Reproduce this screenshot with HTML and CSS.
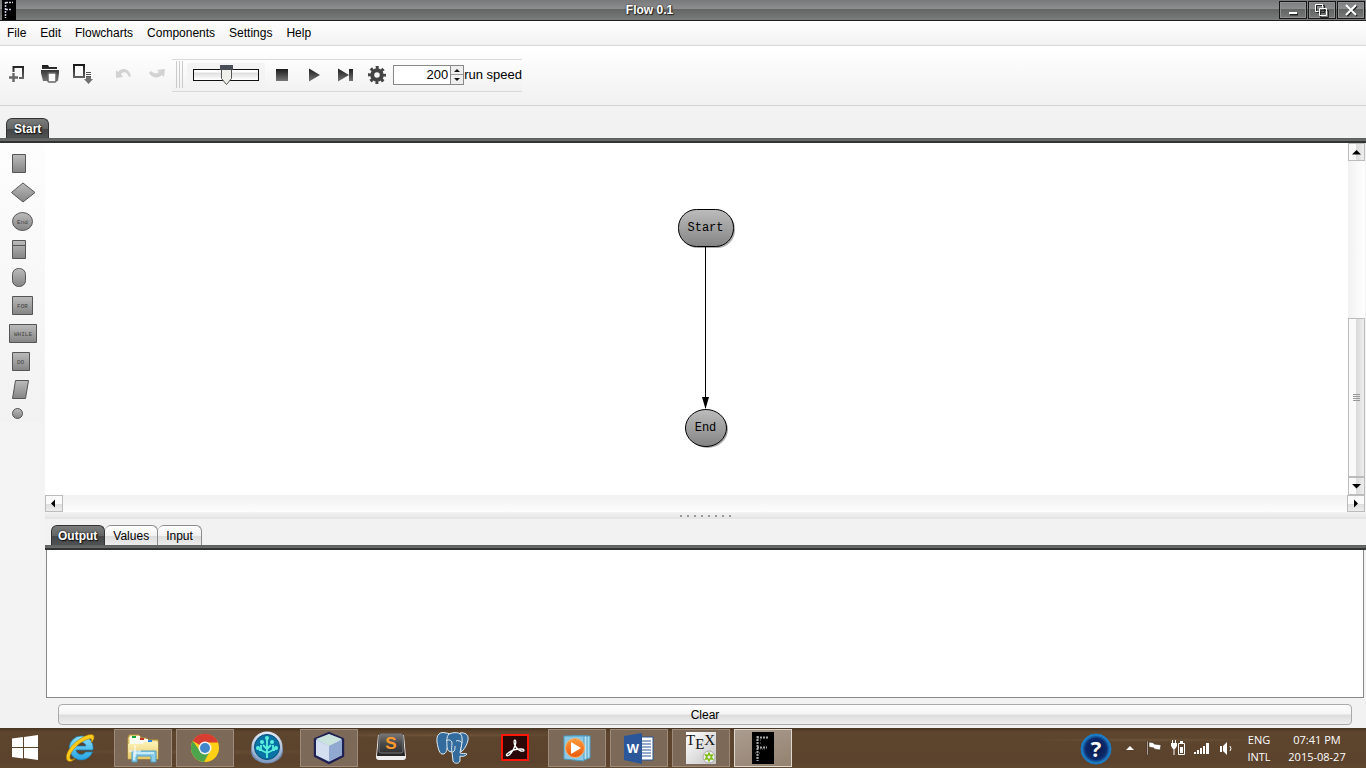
FILE: index.html
```html
<!DOCTYPE html>
<html lang="en">
<head>
<meta charset="utf-8">
<title>Flow 0.1</title>
<link rel="stylesheet" href="styles.css">
</head>
<body>
<svg class="defs" aria-hidden="true">
  <defs>
    <linearGradient id="shape" x1="0" y1="0" x2="0" y2="1"><stop offset="0" stop-color="#bcbcbc"/><stop offset="1" stop-color="#848484"/></linearGradient>
    <linearGradient id="ink" x1="0" y1="0" x2="0" y2="1"><stop offset="0" stop-color="#1c1c1c"/><stop offset="1" stop-color="#777"/></linearGradient>
    <linearGradient id="inkArea" gradientUnits="userSpaceOnUse" x1="0" y1="0" x2="0" y2="20"><stop offset="0" stop-color="#151515"/><stop offset="1" stop-color="#858585"/></linearGradient>
    <linearGradient id="ie" x1="0" y1="0" x2="0" y2="1"><stop offset="0" stop-color="#8be0fb"/><stop offset="1" stop-color="#27a5e4"/></linearGradient>
    <linearGradient id="folder" x1="0" y1="0" x2="0" y2="1"><stop offset="0" stop-color="#fdf3b8"/><stop offset="1" stop-color="#e6c766"/></linearGradient>
    <linearGradient id="metal" x1="0" y1="0" x2="0" y2="1"><stop offset="0" stop-color="#e3ecf7"/><stop offset="1" stop-color="#7f9cc4"/></linearGradient>
    <linearGradient id="key" x1="0" y1="0" x2="0" y2="1"><stop offset="0" stop-color="#777"/><stop offset=".5" stop-color="#4a4a4a"/><stop offset="1" stop-color="#303030"/></linearGradient>
    <linearGradient id="orange" x1="0" y1="0" x2="0" y2="1"><stop offset="0" stop-color="#ff9a3c"/><stop offset="1" stop-color="#e8590c"/></linearGradient>
    <linearGradient id="paper" x1="0" y1="0" x2="1" y2="1"><stop offset="0" stop-color="#fff"/><stop offset="1" stop-color="#c4c4c4"/></linearGradient>
    <radialGradient id="help"><stop offset="0" stop-color="#0a1746"/><stop offset=".7" stop-color="#0c2a6c"/><stop offset="1" stop-color="#2398e6"/></radialGradient>
  </defs>
</svg>

<header class="titlebar">
  <svg class="app-icon" width="14" height="20" viewBox="0 0 14 20"><rect width="14" height="20" fill="#000"/><path d="M3.500 2V18M4 2.500H11M4 9.500H10" stroke="#ccd" stroke-width="1.500" stroke-dasharray="2 1" fill="none"/></svg>
  <h1 class="title">Flow 0.1</h1>
  <div class="window-buttons">
    <button class="window-button" aria-label="Minimize"><svg width="26" height="16" viewBox="0 0 26 16"><path d="M10 12.500h8" stroke="#222" stroke-width="2"/><path d="M9 11h8" stroke="#fff" stroke-width="2"/></svg></button>
    <button class="window-button" aria-label="Restore"><svg width="26" height="16" viewBox="0 0 26 16"><g fill="none" stroke="#222"><path d="M7.500 3.500h8v7h-8zM11.500 8.500h8v7h-8z"/></g><path d="M9.500 9.500h-3v-7h7v3M10.500 6.500h7v7h-7z" fill="none" stroke="#fff"/></svg></button>
    <button class="window-button" aria-label="Close"><svg width="26" height="16" viewBox="0 0 26 16"><path d="M9 4l10 10M19 4l-10 10" stroke="#222" stroke-width="2"/><path d="M8 3l10 10M18 3l-10 10" stroke="#fff" stroke-width="2"/></svg></button>
  </div>
</header>

<nav class="menubar">
  <button>File</button><button>Edit</button><button>Flowcharts</button><button>Components</button><button>Settings</button><button>Help</button>
</nav>

<section class="toolbar">
  <div class="file-tools">
    <button aria-label="New"><svg width="20" height="20" viewBox="0 0 20 20"><path d="M6.500 8V3H16v11h-4" fill="none" stroke="url(#inkArea)" stroke-width="2"/><path d="M2 13.500h9M6.500 9v9" stroke="#666" stroke-width="2.400"/></svg></button>
    <button aria-label="Open"><svg width="20" height="20" viewBox="0 0 20 20"><path d="M2 1h6l1 2h8v2H2zM1 6h18v3l-1 8H3L1 9z" fill="url(#inkArea)"/><rect x="8" y="9" width="8" height="9" rx="1" fill="#fafafa" stroke="#666" stroke-width="1.500"/></svg></button>
    <button aria-label="Save"><svg width="20" height="20" viewBox="0 0 20 20"><rect x="1" y="1" width="10" height="12" fill="none" stroke="url(#inkArea)" stroke-width="2"/><path d="M13 8.500h5M13 10.500h5M13 12.500h5" stroke="#555"/><path d="M13 13h5v2h2l-4.500 5L11 15h2z" fill="#707070"/></svg></button>
    <button class="undo" aria-label="Undo" disabled><svg width="18" height="12" viewBox="0 0 18 12"><path d="M1 2l2 2c4-5 11-4 13 4l-2 1c-2-5-5-6-8-3l2 3-7 1z" fill="#d2d2d2"/></svg></button>
    <button class="redo" aria-label="Redo" disabled><svg width="18" height="12" viewBox="0 0 18 12"><path d="M17 1l-1 8-2-2c-4 4-10 3-13-2l2-2c3 3 6 3 8 1L9 2z" fill="#d2d2d2"/></svg></button>
  </div>
  <div class="run-tools">
    <span class="grip"></span>
    <div class="slider-box"><input class="slider" type="range" min="0" max="100" value="51" aria-label="Speed"></div>
    <button class="run-button" aria-label="Stop"><svg width="18" height="18" viewBox="0 0 18 18"><rect x="3" y="3" width="12" height="12" fill="url(#ink)"/></svg></button>
    <button class="run-button" aria-label="Play"><svg width="18" height="18" viewBox="0 0 18 18"><path d="M4 2.500L15 9 4 15.500z" fill="url(#ink)"/></svg></button>
    <button class="run-button" aria-label="Step"><svg width="18" height="18" viewBox="0 0 18 18"><path d="M2 2.500L13 9 2 15.500zM13 3h4v12h-4z" fill="url(#ink)"/></svg></button>
    <button class="run-button" aria-label="Options"><svg width="18" height="18" viewBox="0 0 18 18"><circle cx="9" cy="9" r="4.800" fill="none" stroke="#444" stroke-width="4"/><circle cx="9" cy="9" r="7.500" fill="none" stroke="#444" stroke-width="3" stroke-dasharray="2.950 2.940" stroke-dashoffset="1.470"/></svg></button>
    <div class="spinner">
      <input id="speed" type="text" value="200">
      <div class="spin-buttons"><button aria-label="Increase"><svg width="12" height="8" viewBox="0 0 12 8"><path d="M3 6l3-3 3 3z" fill="#111"/></svg></button><button aria-label="Decrease"><svg width="12" height="8" viewBox="0 0 12 8"><path d="M3 3l3 3 3-3z" fill="#111"/></svg></button></div>
    </div>
    <label class="speed-label" for="speed">run speed</label>
  </div>
</section>

<div class="tabs chart-tabs"><button class="tab active">Start</button></div>

<main class="workspace">
  <aside class="palette">
    <button aria-label="Process"><svg width="30" height="28" viewBox="0 0 30 28"><path d="M4.500 4.500h13v18h-13z"/></svg></button>
    <button aria-label="Decision"><svg width="30" height="28" viewBox="0 0 30 28"><path d="M15 5l12 9.500L15 24 3.500 14.500z"/></svg></button>
    <button aria-label="Terminal"><svg width="30" height="28" viewBox="0 0 30 28"><ellipse cx="14.500" cy="15.500" rx="10" ry="9"/><text x="14.500" y="18">End</text></svg></button>
    <button aria-label="Declaration"><svg width="30" height="28" viewBox="0 0 30 28"><path d="M4.500 6.500h13v18h-13zM4.500 11.500h13"/></svg></button>
    <button aria-label="Start"><svg width="30" height="28" viewBox="0 0 30 28"><rect x="4.500" y="6.500" width="13" height="18" rx="6"/></svg></button>
    <button aria-label="For loop"><svg width="30" height="28" viewBox="0 0 30 28"><path d="M4.500 6.500h20v18h-20z"/><text x="14.500" y="18">FOR</text></svg></button>
    <button aria-label="While loop"><svg width="30" height="28" viewBox="0 0 30 28"><path d="M1.500 6.500h27v18h-27z"/><text x="15" y="18">WHILE</text></svg></button>
    <button aria-label="Do loop"><svg width="30" height="28" viewBox="0 0 30 28"><path d="M4.500 6.500h17v18h-17z"/><text x="12.500" y="18">DO</text></svg></button>
    <button aria-label="Input or output"><svg width="30" height="28" viewBox="0 0 30 28"><path d="M7.500 6.500h13l-3 18h-13z"/></svg></button>
    <button aria-label="Connector"><svg width="30" height="28" viewBox="0 0 30 28"><circle cx="9.500" cy="11.500" r="5"/></svg></button>
  </aside>

  <div class="editor">
    <div class="canvas-row">
      <div class="canvas">
        <svg class="flow" width="70" height="250" viewBox="0 0 70 250">
          <rect x="9" y="8" width="55" height="37" rx="18" fill="#aaa"/>
          <rect x="7.500" y="6.500" width="55" height="37" rx="18" fill="url(#shape)" stroke="#000"/>
          <path d="M34.500 44v161" stroke="#000"/><path d="M31 194h7l-3.500 12z"/>
          <ellipse cx="36.500" cy="226.500" rx="20.500" ry="18.500" fill="#aaa"/>
          <ellipse cx="35" cy="225" rx="20.500" ry="18.500" fill="url(#shape)" stroke="#000"/>
          <text x="34.500" y="28">Start</text><text x="34.500" y="228">End</text>
        </svg>
      </div>
      <div class="vscroll">
        <button aria-label="Scroll up"><svg width="15" height="15" viewBox="0 0 15 15"><path d="M3 9.500L7.500 5 12 9.500z"/></svg></button>
        <div class="track"></div>
        <div class="thumb"></div>
        <button aria-label="Scroll down"><svg width="15" height="15" viewBox="0 0 15 15"><path d="M3 5l4.500 4.500L12 5z"/></svg></button>
      </div>
    </div>
    <div class="hscroll">
      <button aria-label="Scroll left"><svg width="15" height="15" viewBox="0 0 15 15"><path d="M9 3.500L5 7.500l4 4z"/></svg></button>
      <div class="track"></div>
      <button aria-label="Scroll right"><svg width="15" height="15" viewBox="0 0 15 15"><path d="M6 3.500l4 4-4 4z"/></svg></button>
    </div>
    <div class="divider"><span></span></div>
    <div class="tabs output-tabs"><button class="tab active">Output</button><button class="tab">Values</button><button class="tab">Input</button></div>
    <textarea class="output" aria-label="Output" readonly></textarea>
    <div class="clear-row"><button class="clear">Clear</button></div>
  </div>
</main>

<footer class="taskbar">
  <button class="start" aria-label="Windows"><svg width="28" height="28" viewBox="0 0 28 28"><path d="M1 4.500l11-1.500v10H1zM13 3l14-2v12H13zM1 14h11v10.500L1 23zM13 14h14v12l-14-2z" fill="#fff"/></svg></button>
  <div class="apps">
    <button class="app" aria-label="Internet Explorer"><svg width="32" height="32" viewBox="0 0 32 32"><path d="M16 4a12 12 0 1 0 11.500 16h-7c-2 4-9 3-9.500-2h17C29 10 24 4 16 4zm-5 10c1-5 9-5 10 0z" fill="url(#ie)" stroke="#187cb4" stroke-width=".7"/><path d="M3 29c-5-4 2-16 12-22 7-5 14-6 14-2 0 2-1 4-3 6 1-3 1-5-2-4C14 9 4 21 5 26c0 2 3 2 6 0-3 3-6 4-8 3z" fill="#ffca1a" stroke="#ad7908" stroke-width=".5"/></svg></button>
    <button class="app open" aria-label="File Explorer"><svg width="34" height="32" viewBox="0 0 34 32"><path d="M2 5h1V3h10l2 3h5l2 2h10v19H2z" fill="url(#folder)" stroke="#b99436"/><path d="M4 4h10v3h8v3h9v3H4z" fill="#fffef0"/><path d="M6 4h4v2H6z" fill="#13a538"/><path d="M14 6h4v2h-4z" fill="#c33724"/><path d="M22 8h4v2h-4z" fill="#248be3"/><path d="M2 12h14l3-2h13v17H2z" fill="url(#folder)"/><path d="M6 30V19h24v11h-5v-6H11v6z" fill="#8ccde8" stroke="#4f9fc4"/><path d="M8 28v-7h20" fill="none" stroke="#d8f3fd" stroke-width="1.500"/><path d="M9 13v12M3 19h12" stroke="#fff"/></svg></button>
    <button class="app open" aria-label="Chrome"><svg width="32" height="32" viewBox="0 0 32 32"><circle cx="16" cy="16" r="14" fill="#fdcf15"/><path d="M16 16L3.800 9A14 14 0 0 1 29 10.500H16z" fill="#d93c31"/><path d="M3.800 9A14 14 0 0 0 15 30l6-11-5-3-5 3z" fill="#4ca44c"/><circle cx="16" cy="16" r="6.500" fill="#f4f4f4"/><circle cx="16" cy="16" r="5" fill="#4287c9"/></svg></button>
    <button class="app" aria-label="SourceTree"><svg width="34" height="34" viewBox="0 0 34 34"><ellipse cx="17" cy="20" rx="16" ry="12.500" fill="#718baf"/><circle cx="17" cy="16" r="15.500" fill="url(#metal)"/><circle cx="17" cy="16" r="12.500" fill="#0873a4" stroke="#064e7c"/><g fill="none" stroke="#5cf1df" stroke-width="1.800"><path d="M17 27V8M17 22l-6-3v-5M17 22l6-3v-5M17 18l-4-4M17 18l4-4M11 19H9M23 19h2"/></g><g fill="#5cf1df"><circle cx="17" cy="7" r="2"/><circle cx="12" cy="11" r="2"/><circle cx="22" cy="11" r="2"/><circle cx="8" cy="17" r="2"/><circle cx="26" cy="17" r="2"/></g></svg></button>
    <button class="app open" aria-label="NetBeans"><svg width="32" height="34" viewBox="0 0 32 34"><path d="M16 2l14 6v17l-14 7-14-7V8z" fill="#b0c4df" stroke="#202153" stroke-width="2.400" stroke-linejoin="round"/><path d="M3 8l13-5 13 5-13 7z" fill="#cae3dd"/><path d="M3 9l13 6v15L3 24z" fill="#d3dff0"/><path d="M16 15l13-6v15l-13 6z" fill="#91a8d0"/></svg></button>
    <button class="app" aria-label="Sublime Text"><svg width="32" height="32" viewBox="0 0 32 32"><path d="M3 3h26l2 22q0 3-3 3H4q-3 0-3-3z" fill="#eee"/><path d="M4 2h24l2 22H2z" fill="#252525"/><rect x="4" y="2" width="24" height="19" rx="2" fill="url(#key)" stroke="#777"/><text class="sublime" x="16" y="17">S</text></svg></button>
    <button class="app" aria-label="PostgreSQL"><svg width="34" height="34" viewBox="0 0 34 34"><g fill="#336c9c" stroke="#e2edf3" stroke-width="1"><path d="M10 2C4 0 0 4 1 11c1 7 3 13 6 12 3 0 4-4 4-6 2 2 5 2 5 2V5C14 3 12 2 10 2z"/><path d="M13 3c7-3 14-1 14 5 0 5-3 10-3 14 2 1 5 0 7 1-1 2-5 3-7 2v5c-1 3-6 3-7 0l-1-9c-3 0-5-2-5-5 0-5-1-10 2-13z"/><path d="M24 2c5-1 9 2 8 7-1 5-4 10-7 12-1-4 2-9 1-14 0-2-1-3-2-5z"/><path d="M10 10c2-2 6-1 6 2 0 4-1 5 0 9M20 10c2-1 5 0 6 2M17 21c2-1 2-4 2-6" fill="none"/></g></svg></button>
    <button class="app" aria-label="Acrobat Reader"><svg width="30" height="30" viewBox="0 0 30 30"><rect x="2" y="2" width="26" height="25" fill="#2b0808" stroke="#fa1608" stroke-width="2"/><path d="M15 7c2 1 0 8-4 13-3 4-6 3-4 1 3-3 9-5 14-5 4 0 4 3 0 2-4-1-7-6-7-9 0-1 0-2 1-2z" fill="none" stroke="#fff" stroke-width="1.300"/></svg></button>
    <button class="app open" aria-label="Media Player"><svg width="32" height="30" viewBox="0 0 32 30"><g stroke="#4f9dc0"><path d="M12 3h17v22l-10 2z" fill="#a8daf0"/><path d="M8 3h18v23l-10 2z" fill="#bce4f5"/><path d="M3 3h20v25L3 26z" fill="#8cc9e6"/></g><circle cx="14" cy="15" r="9.500" fill="url(#orange)" stroke="#fbb069"/><path d="M10 9l10 6-10 6z" fill="#fff"/></svg></button>
    <button class="app open" aria-label="Word"><svg width="32" height="32" viewBox="0 0 32 32"><path d="M17 5h13v23H17z" fill="#fff" stroke="#2b579a"/><path d="M19 9h9M19 12h9M19 15h9M19 18h9M19 21h9M19 24h9" stroke="#2b579a"/><path d="M1 4l18-3v31L1 28z" fill="#2b579a"/><text class="word" x="10" y="21">W</text></svg></button>
    <button class="app open" aria-label="TeX"><svg width="32" height="32" viewBox="0 0 32 32"><rect x="1" y="0" width="30" height="32" fill="url(#paper)"/><text class="tex" x="1" y="13">T<tspan dy="4">E</tspan><tspan dy="-4">X</tspan></text><circle cx="24" cy="25" r="6" fill="#eee" stroke="#aaa"/><path d="M24 19.500l1.500 3 3.500-.5-2 3 2 3-3.500-.5-1.500 3-1.500-3-3.500.5 2-3-2-3 3.500.5z" fill="#80bd18"/><circle cx="24" cy="25" r="1.500" fill="#eee"/></svg></button>
    <button class="app open current" aria-label="Flow"><svg width="22" height="32" viewBox="0 0 22 32"><rect width="22" height="32" fill="#000"/><path d="M5.500 4v25M5 5.500h12M5 15.500h10" fill="none" stroke="#aaa" stroke-width="2" stroke-dasharray="2 1"/><path d="M4 8h5M6 11h4M8 17h5M3 21h5M4 26h4" stroke="#777" stroke-dasharray="1 1"/></svg></button>
  </div>
  <div class="tray">
    <button class="help" aria-label="Help"><svg width="32" height="32" viewBox="0 0 32 32"><circle cx="16" cy="16" r="15" fill="url(#help)" stroke="#1b77bd"/><text x="16" y="24">?</text></svg></button>
    <button aria-label="Hidden icons"><svg width="24" height="18" viewBox="0 0 24 18"><path d="M8 11l4-4 4 4z" fill="#fff"/></svg></button>
    <button aria-label="Action Center"><svg width="24" height="18" viewBox="0 0 24 18"><path d="M5 2h1v14H5zM7 3l5 1v1l7 1-1 5-6-1v-1L7 8z" fill="#fff" stroke="#332719" stroke-width=".5"/></svg></button>
    <button aria-label="Battery"><svg width="24" height="18" viewBox="0 0 24 18"><path d="M6.500 1v3M9.500 1v3M8 9v7" fill="none" stroke="#fff"/><path d="M5 4h6v3l-2 3H7L5 7zM14 2h3v2h-3zM14 8h3v6h-3z" fill="#fff"/><path d="M12.500 4.500h6v11h-6z" fill="none" stroke="#fff"/></svg></button>
    <button aria-label="Network"><svg width="24" height="18" viewBox="0 0 24 18"><path d="M4 13h2v2H4zM7 11h2v4H7zM10 9h2v6h-2zM13 7h2v8h-2zM16 4h3v11h-3z" fill="#fff"/></svg></button>
    <button aria-label="Volume"><svg width="26" height="18" viewBox="0 0 26 18"><path d="M6 7h2v6H6zM9 7l4-4v13l-4-4z" fill="#fff"/><path d="M16 7q2 2.500 0 5" fill="none" stroke="#fff"/></svg></button>
    <button class="language">ENG<br>INTL</button>
    <button class="clock">07:41 PM<br>2015-08-27</button>
  </div>
</footer>
</body>
</html>
```
FILE: styles.css
```css
* { box-sizing: border-box; }
body {
  margin: 0;
  min-height: 100vh;
  display: flex;
  flex-direction: column;
  background: #f2f2f2;
  color: #000;
  font: 12px/16px "Liberation Sans", Arial, sans-serif;
}
button {
  margin: 0;
  padding: 0;
  border: 0;
  background: none;
  color: inherit;
  font: inherit;
}
svg { display: block; }
.defs { position: absolute; width: 0; height: 0; }

.titlebar {
  display: flex;
  align-items: center;
  height: 21px;
  padding: 0 1px 0 2px;
  border-bottom: 1px solid #1e1e1e;
  background: linear-gradient(#78797a, #8e8e90 9px, #626463 9px, #7b7d7c);
}
.title {
  flex: 1;
  margin: 0;
  padding-left: 4px;
  color: #fff;
  font-size: 12px;
  line-height: 20px;
  text-align: center;
  text-shadow: 0 0 2px #222, 1px 1px 1px #222;
}
.window-buttons { display: flex; gap: 1px; }
.window-button {
  height: 18px;
  border: 1px solid #161616;
  box-shadow: inset 0 0 0 1px #909092;
}

.menubar {
  display: flex;
  gap: 14px;
  height: 25px;
  padding: 0 7px;
  border-bottom: 1px solid #d8d8d8;
  background: linear-gradient(#fff, #f2f2f2);
}

.toolbar {
  display: flex;
  align-items: center;
  height: 60px;
  border-bottom: 1px solid #d2d2d2;
  background: linear-gradient(#fff, #f1f1f1);
}
.file-tools { display: flex; align-items: center; width: 172px; gap: 13px; padding: 0 0 4px 7px; }
.undo { margin-left: 9px; }
.redo { margin-left: 2px; }
.run-tools {
  display: flex;
  align-items: center;
  width: 350px;
  height: 33px;
  padding: 0 0 2px 4px;
  border: solid #d8d8d8;
  border-width: 1px 0;
  background: linear-gradient(#fdfdfd, #f2f2f2);
}
.grip { width: 7px; height: 27px; background: repeating-linear-gradient(90deg, #cacaca 0 1px, transparent 1px 3px); }
.slider-box {
  display: flex;
  align-items: center;
  width: 78px;
  height: 24px;
  margin: 0 1px 0 4px;
  padding: 0 6px;
  background: #f3f3f3;
}
.slider { appearance: none; width: 66px; height: 20px; margin: 0; background: none; }
.slider::-webkit-slider-runnable-track {
  height: 12px;
  border: 1px solid #111;
  background: linear-gradient(#fff 2px, #dedede 3px, #f6f6f6 8px, #fff 9px);
}
.slider::-webkit-slider-thumb {
  appearance: none;
  width: 13px;
  height: 20px;
  margin-top: -5px;
  background: url("data:image/svg+xml,%3Csvg xmlns='http://www.w3.org/2000/svg' width='13' height='20'%3E%3Cpath d='M1.500 .5h10v13l-5 6-5-6z' fill='%23f0f0ea' stroke='%23555'/%3E%3Cpath d='M0 0h13v5H0z' fill='%23494d55'/%3E%3C/svg%3E") no-repeat;
}
.run-button { display: flex; justify-content: center; width: 32px; }
.spinner { display: flex; width: 71px; height: 20px; border: 1px solid #888; background: #fff; }
.spinner input { flex: 1; min-width: 0; padding: 0 2px; border: 0; background: none; font: inherit; font-size: 13px; text-align: right; }
.spin-buttons { display: grid; border-left: 1px solid #888; background: #eee; }
.spin-buttons button:first-child { border-bottom: 1px solid #999; }
.speed-label { font-size: 13px; white-space: nowrap; }

.tabs { display: flex; padding: 0 6px 5px; background: linear-gradient(#5c5f5e, #6b6e6d 3px, #333 3px) bottom / 100% 5px no-repeat; }
.chart-tabs { height: 37px; padding-top: 12px; }
.tab {
  padding: 1px 8px 0;
  border: 1px solid #8b8b8b;
  border-left-width: 0;
  border-bottom: 0;
  border-radius: 6px 6px 0 0;
  background: linear-gradient(#fff, #f0f0f0 10px, #dcdcdc 10px, #ececec);
}
.tab.active {
  border: 1px solid #333;
  border-bottom: 0;
  padding: 0 7px 0 6px;
  background: linear-gradient(#7b7d7d, #636565 10px, #434546 10px, #505253);
  color: #fff;
  font-weight: bold;
  text-shadow: 0 0 2px #111, 1px 1px 1px #111;
}
.chart-tabs .tab.active { padding: 0 7px; }

.workspace { flex: 1; display: flex; }
.palette { display: flex; flex-direction: column; width: 45px; padding: 7px 0 0 8px; background: linear-gradient(#fdfdfd, #f2f2f2 280px, #f4f4f4 280px, #f2f2f2); }
.palette svg { fill: url(#shape); stroke: #555; }
.palette text { fill: #444; stroke: none; font: 6px "Liberation Mono", monospace; text-anchor: middle; }

.editor { flex: 1; min-width: 0; display: flex; flex-direction: column; }
.canvas-row { flex: 1; display: flex; padding-right: 1px; }
.canvas { flex: 1; position: relative; background: #fff; }
.flow { position: absolute; left: 626px; top: 60px; }
.flow text { font: 12px "Liberation Mono", monospace; text-anchor: middle; }
.vscroll { display: flex; flex-direction: column; width: 17px; }
.vscroll button { height: 18px; padding: 0; border: 1px solid #bcbcbc; background: linear-gradient(90deg, #fafafa 50%, #dcdcdc 50%, #eee); }
.vscroll .track { flex: 158; background: linear-gradient(90deg, #f1f1f1, #fff); }
.vscroll .thumb {
  flex: 158;
  border: 1px solid #bcbcbc;
  background: repeating-linear-gradient(#999 0 1px, transparent 1px 2px) center / 7px 7px no-repeat, linear-gradient(90deg, #fafafa 50%, #dadada 50%, #eee);
}
.hscroll { display: flex; height: 17px; padding-right: 1px; }
.hscroll button { width: 18px; border: 1px solid #bcbcbc; background: linear-gradient(#fafafa 50%, #dcdcdc 50%, #eee); }
.hscroll .track { flex: 1; background: linear-gradient(#f1f1f1, #fdfdfd); }
.divider { display: flex; justify-content: center; align-items: center; height: 7px; background: linear-gradient(#f3f3f3, #e4e4e4); }
.divider span { width: 52px; height: 2px; background: repeating-linear-gradient(90deg, #999 0 2px, transparent 2px 7px); }
.output-tabs { height: 31px; padding-top: 6px; }
.output { display: block; height: 148px; margin: 0 2px 0 1px; padding: 4px; border: 1px solid #888; border-top: 0; background: #fff; resize: none; outline: 0; }
.clear-row { display: flex; padding: 6px 14px 3px 13px; }
.clear { flex: 1; height: 21px; padding-top: 1px; border: 1px solid #aaa; border-radius: 4px; background: linear-gradient(#fdfdfd, #f5f5f5 9px, #dcdcdc 10px, #efefef); }

.taskbar {
  display: flex;
  align-items: stretch;
  height: 40px;
  color: #fff;
  background:
    radial-gradient(ellipse 150px 2px at 32% 18%, #6d543a, transparent),
    radial-gradient(ellipse 120px 2px at 84% 30%, #6d543a, transparent),
    radial-gradient(ellipse 160px 3px at 14% 60%, #684e35, transparent),
    linear-gradient(#473522, #5e452e 4px, #5b422c 34px, #604830);
}
.start { display: flex; align-items: center; padding-left: 11px; width: 52px; }
.apps { display: flex; gap: 4px; padding-top: 1px; }
.app { display: flex; align-items: center; justify-content: center; width: 58px; height: 38px; }
.app.open { border: 1px solid #9c8b7b; background: #7d6958; }
.app.current { border-color: #ded7d0; background: linear-gradient(160deg, #aa9c8f, #94816f); }
.sublime { fill: #ff9a2e; font: bold 17px "Liberation Sans", sans-serif; text-anchor: middle; }
.word { fill: #fff; font: bold 13px "Liberation Sans", sans-serif; text-anchor: middle; }
.tex { fill: #111; font: 15px "Liberation Serif", serif; }
.tray { display: flex; align-items: center; margin-left: auto; padding-right: 18px; }
.help { padding: 2px 6px 0 0; }
.help text { fill: #fff; font: bold 22px/24px "Open Sans", sans-serif; text-anchor: middle; }
.language, .clock { font: 11px/17px "Open Sans", sans-serif; text-align: center; }
.language { width: 38px; }
.clock { margin-left: 8px; width: 62px; }
```
